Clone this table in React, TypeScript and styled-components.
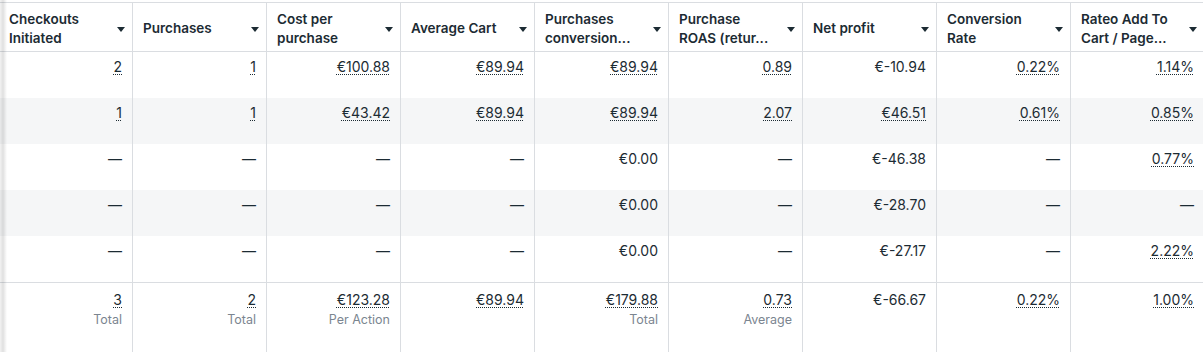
import React from "react";
import styled, { createGlobalStyle } from "styled-components";

const GlobalStyle = createGlobalStyle`
  html, body { margin: 0; padding: 0; background: #fff; }
  body { font-family: Inter, "Liberation Sans", sans-serif; color: #1c2b33; }
`;

const Wrapper = styled.div`
  position: relative;
  width: 1203px;
  height: 352px;
  overflow: hidden;
  padding-top: 2px;
  box-sizing: border-box;
  &::before {
    content: "";
    position: absolute;
    left: 0;
    top: 0;
    bottom: 0;
    width: 7px;
    background: linear-gradient(to right, rgba(0,0,0,0.05) 0, rgba(0,0,0,0.12) 3px, rgba(0,0,0,0) 7px);
    z-index: 2;
    pointer-events: none;
  }
`;

const Grid = styled.div`
  display: grid;
  grid-template-columns: 133px repeat(8, 134px);
  border-top: 1px solid #dadde1;
  width: max-content;
`;

const HeaderCell = styled.div<{ $first?: boolean }>`
  height: 49px;
  box-sizing: border-box;
  border-right: 1px solid #dadde1;
  border-bottom: 1px solid #dadde1;
  display: flex;
  align-items: center;
  justify-content: space-between;
  padding: 3px 7px 0 ${(p) => (p.$first ? "9px" : "10px")};
  font-size: 13.5px;
  font-weight: 600;
  line-height: 19px;
  color: #1c2b33;
`;

const HeaderLabel = styled.span`
  white-space: pre-line;
`;

const Caret = styled.span`
  width: 0;
  height: 0;
  border-left: 4.5px solid transparent;
  border-right: 4.5px solid transparent;
  border-top: 5px solid #1c2b33;
  margin-top: 1px;
  flex-shrink: 0;
`;

const Cell = styled.div<{ $shade?: boolean; $footer?: boolean }>`
  height: ${(p) => (p.$footer ? "71px" : "46px")};
  box-sizing: border-box;
  border-right: 1px solid #dadde1;
  border-top: ${(p) => (p.$footer ? "1px solid #dadde1" : "none")};
  background: ${(p) => (p.$shade ? "#f5f6f7" : "#fff")};
  display: flex;
  flex-direction: column;
  align-items: flex-end;
  padding: ${(p) => (p.$footer ? "7px 10px 0 8px" : "5px 10px 0 8px")};
  font-size: 14px;
  line-height: 19px;
  color: #1c2b33;
`;

const Value = styled.span<{ $dotted?: boolean }>`
  text-decoration: ${(p) => (p.$dotted ? "underline dotted #1c2b33" : "none")};
  text-underline-offset: 2px;
  text-decoration-thickness: 1px;
`;

const SubLabel = styled.span`
  font-size: 12.5px;
  line-height: 16px;
  color: #7b8590;
  margin-top: 3px;
`;

const headers = [
  "Checkouts\nInitiated",
  "Purchases",
  "Cost per\npurchase",
  "Average Cart",
  "Purchases\nconversion...",
  "Purchase\nROAS (retur...",
  "Net profit",
  "Conversion\nRate",
  "Rateo Add To\nCart / Page...",
];

type V = [string, boolean];
const D = "—";
const rows: V[][] = [
  [["2", true], ["1", true], ["€100.88", true], ["€89.94", true], ["€89.94", true], ["0.89", true], ["€-10.94", false], ["0.22%", true], ["1.14%", true]],
  [["1", true], ["1", true], ["€43.42", true], ["€89.94", true], ["€89.94", true], ["2.07", true], ["€46.51", true], ["0.61%", true], ["0.85%", true]],
  [[D, false], [D, false], [D, false], [D, false], ["€0.00", false], [D, false], ["€-46.38", false], [D, false], ["0.77%", true]],
  [[D, false], [D, false], [D, false], [D, false], ["€0.00", false], [D, false], ["€-28.70", false], [D, false], [D, false]],
  [[D, false], [D, false], [D, false], [D, false], ["€0.00", false], [D, false], ["€-27.17", false], [D, false], ["2.22%", true]],
];

const footer: [string, boolean, string][] = [
  ["3", true, "Total"],
  ["2", true, "Total"],
  ["€123.28", true, "Per Action"],
  ["€89.94", true, ""],
  ["€179.88", true, "Total"],
  ["0.73", true, "Average"],
  ["€-66.67", false, ""],
  ["0.22%", true, ""],
  ["1.00%", true, ""],
];

export default function App() {
  return (
    <>
      <GlobalStyle />
      <Wrapper>
        <Grid>
          {headers.map((h, i) => (
            <HeaderCell key={"h" + i} $first={i === 0}>
              <HeaderLabel>{h}</HeaderLabel>
              <Caret />
            </HeaderCell>
          ))}
          {rows.map((r, ri) =>
            r.map(([v, d], ci) => (
              <Cell key={`r${ri}c${ci}`} $shade={ri % 2 === 1}>
                <Value $dotted={d}>{v}</Value>
              </Cell>
            ))
          )}
          {footer.map(([v, d, l], ci) => (
            <Cell key={"f" + ci} $footer>
              <Value $dotted={d}>{v}</Value>
              {l && <SubLabel>{l}</SubLabel>}
            </Cell>
          ))}
        </Grid>
      </Wrapper>
    </>
  );
}
